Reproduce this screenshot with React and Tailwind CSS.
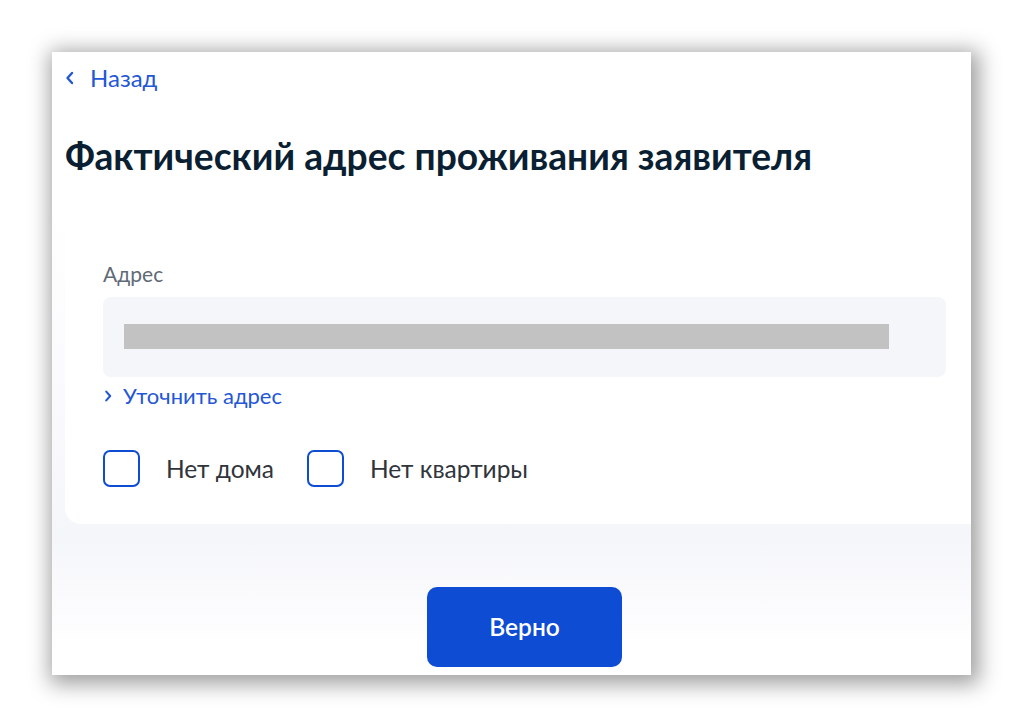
import React from 'react'

const Chevron = ({ dir = 'left', className = '' }) => (
  <svg viewBox="0 0 10 16" className={className} fill="none" stroke="currentColor" strokeWidth="2.4" strokeLinecap="round" strokeLinejoin="round">
    {dir === 'left' ? <polyline points="7,3 2.5,8 7,13" /> : <polyline points="3,3 7.5,8 3,13" />}
  </svg>
)

const Checkbox = ({ label }) => (
  <label className="flex items-center">
    <span className="w-[37px] h-[37px] rounded-[7px] border-[2.5px] border-[#0d4cd3] bg-white" />
    <span className="ml-[26px] text-[24.5px] leading-[28px] text-[#30353c]">{label}</span>
  </label>
)

export default function App() {
  return (
    <div className="h-[728px] w-[1024px] bg-white pt-[52px] pl-[52px]" style={{ fontFamily: 'Lato, "Noto Sans", sans-serif' }}>
      <div className="w-[919px] h-[623px] overflow-hidden bg-[linear-gradient(180deg,#ffffff_25%,#f5f6fa_78%,#ffffff_96%)] shadow-[3px_4px_20px_5px_rgba(0,0,0,0.38)]">
        <a className="mt-[12px] ml-[13px] flex items-center text-[#2457d6] text-[24px] leading-[28px]">
          <Chevron className="w-[10px] h-[16px] mr-[15px]" />
          <span>Назад</span>
        </a>

        <h1 className="mt-[44px] ml-[13px] text-[37.2px] leading-[40px] font-bold text-[#0b1f33]">
          Фактический адрес проживания заявителя
        </h1>

        <div className="mt-[29px] ml-[13px] w-[940px] h-[319px] rounded-[16px] bg-white pt-[56px] pl-[38px]">
          <div className="text-[21px] leading-[25px] text-[#5f6a76]">Адрес</div>
          <div className="mt-[11px] w-[843px] h-[80px] rounded-[8px] bg-[#f5f6fa] pt-[27px] pl-[21px]">
            <div className="w-[765px] h-[25px] bg-[#c2c2c2]" />
          </div>
          <a className="mt-[6px] flex items-center text-[#2457d6] text-[22px] leading-[26px]">
            <Chevron dir="right" className="w-[10px] h-[14px] mr-[10px]" />
            <span>Уточнить адрес</span>
          </a>
          <div className="mt-[41px] flex items-center gap-[33px]">
            <Checkbox label="Нет дома" />
            <Checkbox label="Нет квартиры" />
          </div>
        </div>

        <button className="mt-[63px] ml-[375px] w-[195px] h-[80px] rounded-[10px] bg-[#0d4cd3] text-white text-[24.5px] font-semibold">
          Верно
        </button>
      </div>
    </div>
  )
}
